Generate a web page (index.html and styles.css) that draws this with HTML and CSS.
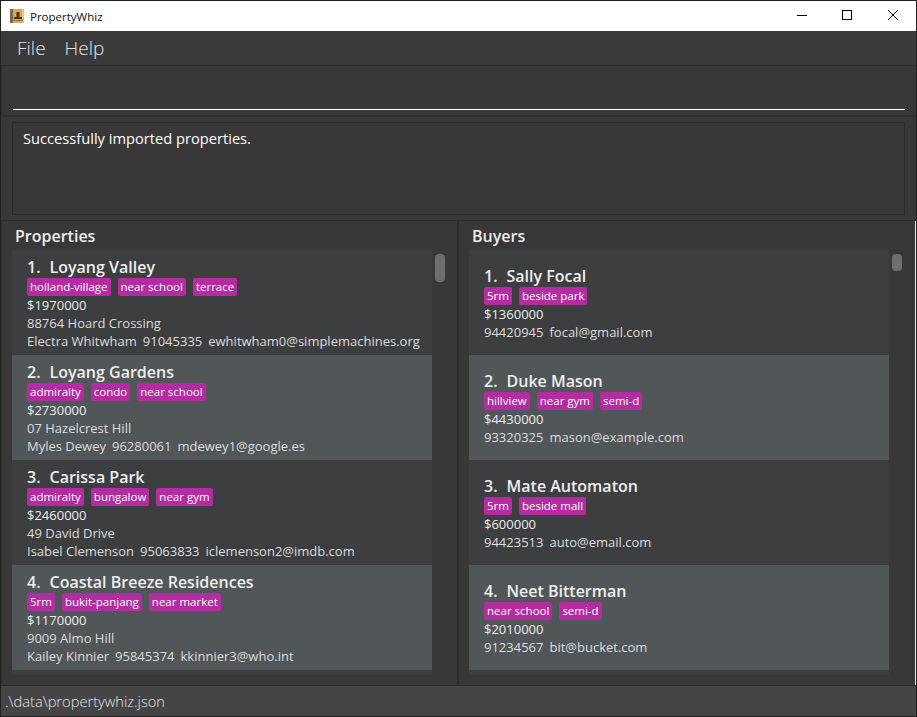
FILE: index.html
```html
<!DOCTYPE html>
<html lang="en">
<head>
    <meta charset="UTF-8">
    <title>PropertyWhiz</title>
    <link rel="stylesheet" href="styles.css">
</head>
<body>
    <div class="window">
        <div class="titlebar">
            <svg class="app-icon" width="14" height="14" viewBox="0 0 14 14">
                <rect width="14" height="14" fill="#d9a760"/>
                <rect x="0" width="3" height="14" fill="#7d6a50"/>
                <rect x="12" width="2" height="14" fill="#e8c27e"/>
                <rect x="6.5" y="3" width="3" height="5" fill="#4a3418"/>
                <rect x="4" y="8" width="8" height="2" fill="#4a3418"/>
                <rect x="3" y="11" width="10" height="1" fill="#9c7238"/>
            </svg>
            <span class="app-title">PropertyWhiz</span>
            <div class="win-controls">
                <svg width="46" height="30" viewBox="0 0 46 30"><path d="M19 14.5h10" stroke="#000" fill="none"/></svg>
                <svg width="46" height="30" viewBox="0 0 46 30"><rect x="18.5" y="9.5" width="9" height="9" stroke="#000" fill="none"/></svg>
                <svg width="46" height="30" viewBox="0 0 46 30"><path d="M18 9l10 10M28 9l-10 10" stroke="#000" fill="none"/></svg>
            </div>
        </div>

        <div class="menubar">
            <span class="menu-item">File</span>
            <span class="menu-item">Help</span>
        </div>

        <div class="command-box">
            <div class="command-input"></div>
        </div>

        <div class="result-pane">
            <div class="result-box">Successfully imported properties.</div>
        </div>

        <div class="lists">
            <section class="list-pane list-left">
                <h2 class="list-title">Properties</h2>
                <div class="list-body">
                    <div class="cards">
                        <div class="card">
                            <div class="card-name"><span>1.</span><span>Loyang Valley</span></div>
                            <div class="tags"><span class="tag">holland-village</span><span class="tag">near school</span><span class="tag">terrace</span></div>
                            <div class="card-price">$1970000</div>
                            <div class="card-line">88764 Hoard Crossing</div>
                            <div class="card-line"><span>Electra Whitwham</span><span>91045335</span><span>ewhitwham0@simplemachines.org</span></div>
                        </div>
                        <div class="card card-alt">
                            <div class="card-name"><span>2.</span><span>Loyang Gardens</span></div>
                            <div class="tags"><span class="tag">admiralty</span><span class="tag">condo</span><span class="tag">near school</span></div>
                            <div class="card-price">$2730000</div>
                            <div class="card-line">07 Hazelcrest Hill</div>
                            <div class="card-line"><span>Myles Dewey</span><span>96280061</span><span>mdewey1@google.es</span></div>
                        </div>
                        <div class="card">
                            <div class="card-name"><span>3.</span><span>Carissa Park</span></div>
                            <div class="tags"><span class="tag">admiralty</span><span class="tag">bungalow</span><span class="tag">near gym</span></div>
                            <div class="card-price">$2460000</div>
                            <div class="card-line">49 David Drive</div>
                            <div class="card-line"><span>Isabel Clemenson</span><span>95063833</span><span>iclemenson2@imdb.com</span></div>
                        </div>
                        <div class="card card-alt">
                            <div class="card-name"><span>4.</span><span>Coastal Breeze Residences</span></div>
                            <div class="tags"><span class="tag">5rm</span><span class="tag">bukit-panjang</span><span class="tag">near market</span></div>
                            <div class="card-price">$1170000</div>
                            <div class="card-line">9009 Almo Hill</div>
                            <div class="card-line"><span>Kailey Kinnier</span><span>95845374</span><span>kkinnier3@who.int</span></div>
                        </div>
                        <div class="card-peek"></div>
                    </div>
                    <div class="scroll-track"><div class="scroll-thumb scroll-thumb-long"></div></div>
                </div>
            </section>

            <section class="list-pane list-right">
                <h2 class="list-title">Buyers</h2>
                <div class="list-body">
                    <div class="cards">
                        <div class="card card-buyer">
                            <div class="card-name"><span>1.</span><span>Sally Focal</span></div>
                            <div class="tags"><span class="tag">5rm</span><span class="tag">beside park</span></div>
                            <div class="card-price">$1360000</div>
                            <div class="card-line"><span>94420945</span><span>focal@gmail.com</span></div>
                        </div>
                        <div class="card card-buyer card-alt">
                            <div class="card-name"><span>2.</span><span>Duke Mason</span></div>
                            <div class="tags"><span class="tag">hillview</span><span class="tag">near gym</span><span class="tag">semi-d</span></div>
                            <div class="card-price">$4430000</div>
                            <div class="card-line"><span>93320325</span><span>mason@example.com</span></div>
                        </div>
                        <div class="card card-buyer">
                            <div class="card-name"><span>3.</span><span>Mate Automaton</span></div>
                            <div class="tags"><span class="tag">5rm</span><span class="tag">beside mall</span></div>
                            <div class="card-price">$600000</div>
                            <div class="card-line"><span>94423513</span><span>auto@email.com</span></div>
                        </div>
                        <div class="card card-buyer card-alt">
                            <div class="card-name"><span>4.</span><span>Neet Bitterman</span></div>
                            <div class="tags"><span class="tag">near school</span><span class="tag">semi-d</span></div>
                            <div class="card-price">$2010000</div>
                            <div class="card-line"><span>91234567</span><span>bit@bucket.com</span></div>
                        </div>
                        <div class="card-peek"></div>
                    </div>
                    <div class="scroll-track"><div class="scroll-thumb"></div></div>
                </div>
            </section>
        </div>

        <div class="statusbar">.\data\propertywhiz.json</div>
    </div>
</body>
</html>
```

FILE: styles.css
```css
html, body {
    margin: 0;
    height: 100%;
}
body {
    background-color: #383838;
    font-family: "Open Sans", sans-serif;
    overflow: hidden;
}
.window {
    height: 717px;
    box-sizing: border-box;
    border: 1px solid #222;
    display: flex;
    flex-direction: column;
    background-color: #383838;
}
.titlebar {
    height: 30px;
    flex: none;
    background-color: white;
    display: flex;
    align-items: center;
    padding-left: 9px;
}
.app-title {
    font-size: 11.5px;
    color: #111;
    margin-left: 6px;
}
.win-controls {
    margin-left: auto;
    display: flex;
}
.menubar {
    height: 35px;
    flex: none;
    box-sizing: border-box;
    background-color: #3a3a3a;
    border-bottom: 1px solid #2d2d2d;
    display: flex;
    align-items: center;
    padding-left: 16px;
    gap: 19px;
}
.menu-item {
    font-size: 19px;
    font-weight: 300;
    color: #e4e4e4;
}
.command-box {
    height: 51px;
    flex: none;
    box-sizing: border-box;
    background-color: #383838;
    padding: 0 11px;
    border-left: 1px solid #2d2d2d;
    border-bottom: 2px solid #2d2d2d;
}
.command-input {
    height: 44px;
    box-sizing: border-box;
    border-bottom: 1px solid white;
}
.result-pane {
    height: 104px;
    flex: none;
    box-sizing: border-box;
    padding: 5px 11px;
    border-bottom: 1px solid #2d2d2d;
}
.result-box {
    height: 100%;
    box-sizing: border-box;
    border: 1px solid #2c2c2c;
    padding: 5px 10px;
    font-size: 14.67px;
    line-height: 20px;
    color: white;
}
.lists {
    flex: 1;
    min-height: 0;
    display: flex;
    border-right: 1px solid #e8e8e8;
}
.list-pane {
    display: flex;
    flex-direction: column;
    box-sizing: border-box;
}
.list-left {
    width: 458px;
    flex: none;
    border-left: 1px solid #2d2d2d;
    border-right: 2px solid #2d2d2d;
    padding-left: 10px;
}
.list-right {
    flex: 1;
    padding-left: 10px;
}
.list-title {
    margin: 0;
    height: 29px;
    padding-left: 3px;
    font-size: 16px;
    line-height: 30px;
    font-weight: 600;
    color: #eeeeee;
}
.list-body {
    display: flex;
    flex: 1;
    min-height: 0;
}
.cards {
    width: 420px;
    flex: none;
    overflow: hidden;
}
.card {
    height: 105px;
    box-sizing: border-box;
    background-color: #3c3e3f;
    padding: 6px 15px 0;
}
.card-alt {
    background-color: #515658;
}
.card-buyer {
    padding-top: 15px;
}
.card-peek {
    height: 5px;
    background-color: #3c3e3f;
}
.card-name {
    display: flex;
    gap: 9px;
    font-size: 16px;
    line-height: 22px;
    font-weight: 600;
    color: #eeeeee;
}
.tags {
    display: flex;
    gap: 7px;
}
.tag {
    background-color: #b32ca1;
    color: white;
    font-size: 11.5px;
    line-height: 18px;
    padding: 0 3px;
    border-radius: 2px;
}
.card-price {
    font-size: 13px;
    line-height: 18px;
    font-weight: 500;
    color: #eeeeee;
}
.card-line {
    display: flex;
    gap: 6px;
    white-space: nowrap;
    font-size: 13px;
    line-height: 18px;
    color: #dddddd;
}
.scroll-track {
    flex: 1;
    padding: 4px 3px 0;
}
.scroll-thumb {
    width: 10px;
    height: 17px;
    background-color: #6e6e6e;
    border-radius: 4px;
}
.scroll-thumb-long {
    height: 28px;
}
.statusbar {
    height: 31px;
    flex: none;
    box-sizing: border-box;
    background-color: #454545;
    border-top: 1px solid #2d2d2d;
    padding-left: 4px;
    font-size: 14.67px;
    font-weight: 300;
    line-height: 30px;
    color: #e4e4e4;
}
```
